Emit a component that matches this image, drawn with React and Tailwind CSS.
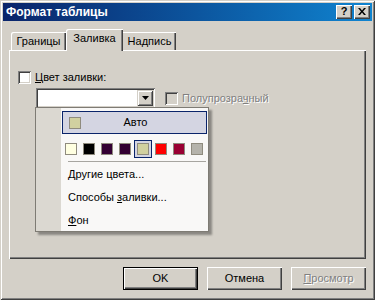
export default function App() {
  const raised =
    "shadow-[inset_1px_1px_#ffffff,inset_-1px_-1px_#404040,inset_-2px_-2px_#808080]";
  const sunken =
    "shadow-[inset_1px_1px_#808080,inset_-1px_-1px_#ffffff,inset_2px_2px_#404040,inset_-2px_-2px_#D4D0C8]";
  const swatches = ["#FFFFE1", "#000000", "#330033", "#330033", "#D1D0A0", "#FF0000", "#990033", "#B5B3AB"];

  return (
    <div className="w-[375px] h-[300px] bg-[#D4D0C8] p-[3px] flex flex-col font-['Liberation_Sans',Arial,sans-serif] text-[11px] text-black leading-none shadow-[inset_1px_1px_#D4D0C8,inset_-1px_-1px_#404040,inset_2px_2px_#ffffff,inset_-2px_-2px_#808080]">
      {/* Title bar */}
      <div className="h-[18px] flex items-center pl-[3px] pr-[2px] bg-gradient-to-r from-[#0A246A] to-[#1084D0]">
        <span className="flex-1 text-white font-bold text-[12px]">Формат таблицы</span>
        <div className={"w-[16px] h-[14px] bg-[#D4D0C8] flex items-center justify-center text-[11px] font-bold pb-[1px] " + raised}>?</div>
        <div className={"w-[16px] h-[14px] ml-[2px] bg-[#D4D0C8] flex items-center justify-center pb-[1px] " + raised}>
          <svg width="8" height="7" viewBox="0 0 8 7">
            <path d="M0 0h2l2 2.5L6 0h2L5 3.5 8 7H6L4 4.5 2 7H0l3-3.5z" fill="#000" />
          </svg>
        </div>
      </div>

      {/* Tabs + panel */}
      <div className="px-[6px] mt-[8px] flex flex-col">
        <div className="flex items-end h-[21px] pl-[2px]">
          <div className="w-[55px] h-[18px] flex items-center justify-center shadow-[inset_1px_1px_#ffffff,inset_-1px_0_#404040,inset_-2px_0_#808080] rounded-tl-[2px]">
            Границы
          </div>
          <div className="relative z-10 w-[57px] h-[22px] -mb-[1px] bg-[#D4D0C8] flex items-center justify-center pb-[3px] shadow-[inset_1px_1px_#ffffff,inset_-1px_0_#404040,inset_-2px_0_#808080] rounded-tl-[2px]">
            Заливка
          </div>
          <div className="w-[53px] h-[18px] flex items-center justify-center shadow-[inset_0_1px_#ffffff,inset_-1px_0_#404040,inset_-2px_0_#808080]">
            Надпись
          </div>
        </div>

        <div className="relative h-[209px] shadow-[inset_1px_1px_#ffffff,inset_-1px_-1px_#404040,inset_-2px_-2px_#808080] pl-[9px] pt-[21px] flex flex-col">
          <div className="flex items-center h-[13px]">
            <div className={"w-[13px] h-[13px] bg-white " + sunken}></div>
            <span className="ml-[4px]">
              <u>Ц</u>вет заливки:
            </span>
          </div>

          <div className="flex items-center mt-[4px] ml-[18px]">
            <div className={"w-[119px] h-[20px] bg-white flex justify-end p-[2px] " + sunken}>
              <div className="w-[16px] h-[16px] bg-[#D4D0C8] flex items-center justify-center shadow-[inset_1px_1px_#D4D0C8,inset_-1px_-1px_#404040,inset_2px_2px_#ffffff,inset_-2px_-2px_#808080]">
                <svg width="7" height="4" viewBox="0 0 7 4">
                  <path d="M0 0h7L3.5 4z" fill="#000" />
                </svg>
              </div>
            </div>
            <div className={"ml-[10px] w-[13px] h-[13px] bg-[#D4D0C8] " + sunken}></div>
            <span className="ml-[4px] text-[#808080] [text-shadow:1px_1px_0_#ffffff]">
              Полупрозра<u>ч</u>ный
            </span>
          </div>

          {/* Dropdown menu overlay */}
          <div className="absolute left-[26px] top-[57px] w-[174px] h-[125px] bg-[#F9F8F7] border border-[#7E7B74] flex shadow-[3px_3px_2px_rgba(0,0,0,0.35)]">
            <div className="w-[25px] bg-[#DBD8D1]"></div>
            <div className="flex-1 flex flex-col pt-[3px] pl-[1px] pr-[1px]">
              <div className="h-[23px] border border-[#0A246A] bg-[#D4D5E2] flex items-center pl-[6px]">
                <div className="w-[12px] h-[12px] bg-[#D1D0A0] border border-[#8F8B7E]"></div>
                <span className="flex-1 text-center pr-[16px]">Авто</span>
              </div>
              <div className="flex mt-[6px]">
                {swatches.map((c, i) => (
                  <div
                    key={i}
                    className={
                      "w-[18px] h-[18px] flex items-center justify-center " +
                      (i === 4 ? "border border-[#0A246A] bg-[#D4D5E2]" : "")
                    }
                  >
                    <div className="w-[12px] h-[12px] border border-[#8F8B7E]" style={{ backgroundColor: c }}></div>
                  </div>
                ))}
              </div>
              <div className="h-px bg-[#A7A5A0] mt-[3px] ml-[6px] mr-[1px]"></div>
              <div className="mt-[1px] h-[23px] flex items-center pl-[6px]">
                <span>
                  <u>Д</u>ругие цвета...
                </span>
              </div>
              <div className="h-[23px] flex items-center pl-[6px]">
                <span>
                  Способы <u>з</u>аливки...
                </span>
              </div>
              <div className="h-[22px] flex items-center pl-[6px]">
                <span>
                  <u>Ф</u>он
                </span>
              </div>
            </div>
          </div>
        </div>
      </div>

      {/* Buttons */}
      <div className="flex justify-end gap-[9px] pr-[6px] mt-[8px]">
        <div className="w-[75px] h-[23px] flex items-center justify-center shadow-[inset_0_0_0_1px_#000000,inset_2px_2px_#ffffff,inset_-2px_-2px_#404040,inset_-3px_-3px_#808080]">
          OK
        </div>
        <div className={"w-[75px] h-[23px] flex items-center justify-center " + raised}>Отмена</div>
        <div className={"w-[75px] h-[23px] flex items-center justify-center text-[#808080] [text-shadow:1px_1px_0_#ffffff] " + raised}>
          <span>
            <u>П</u>росмотр
          </span>
        </div>
      </div>
    </div>
  );
}
